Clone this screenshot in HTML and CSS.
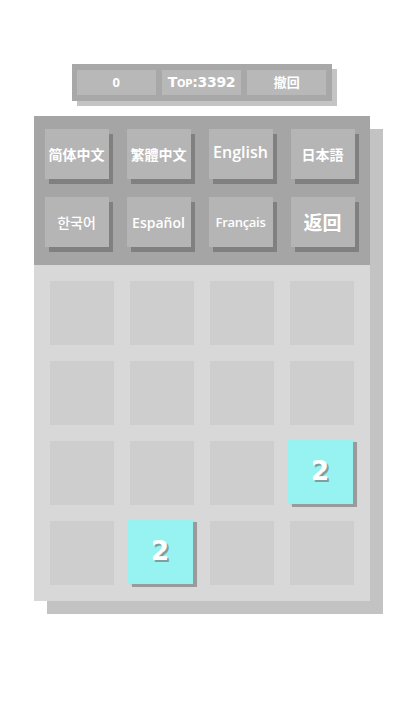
FILE: index.html
```html
<!DOCTYPE html>
<html lang="zh-CN">
<head>
  <meta charset="UTF-8">
  <meta name="viewport" content="width=device-width, initial-scale=1.0">
  <title>2048</title>
  <link rel="stylesheet" href="styles.css">
</head>
<body>
  <!-- スコアバー -->
  <div class="scorebar">
    <div class="score-btn">0</div>
    <div class="score-btn top">Top:3392</div>
    <div class="score-btn">撤回</div>
  </div>

  <div class="game">
    <!-- 言語選択 -->
    <div class="lang-panel">
      <div class="lang-btn">简体中文</div>
      <div class="lang-btn" lang="zh-TW">繁體中文</div>
      <div class="lang-btn latin big">English</div>
      <div class="lang-btn" lang="ja">日本語</div>
      <div class="lang-btn ko" lang="ko">한국어</div>
      <div class="lang-btn latin">Español</div>
      <div class="lang-btn latin small">Français</div>
      <div class="lang-btn back">返回</div>
    </div>

    <div class="board">
      <div class="cell"></div>
      <div class="cell"></div>
      <div class="cell"></div>
      <div class="cell"></div>
      <div class="cell"></div>
      <div class="cell"></div>
      <div class="cell"></div>
      <div class="cell"></div>
      <div class="cell"></div>
      <div class="cell"></div>
      <div class="cell"></div>
      <div class="cell"><div class="tile">2</div></div>
      <div class="cell"></div>
      <div class="cell"><div class="tile">2</div></div>
      <div class="cell"></div>
      <div class="cell"></div>
    </div>
  </div>
</body>
</html>
```

FILE: styles.css
```css
* {
  margin: 0;
  padding: 0;
  box-sizing: border-box;
}
body {
  font-family: "Noto Sans", "Noto Sans CJK SC", sans-serif;
  background-color: #fff;
  color: #fff;
  width: 403px;
  height: 718px;
  overflow: hidden;
}

/* スコアバー */
.scorebar {
  display: flex;
  gap: 6px;
  width: 260px;
  margin: 64px auto 0;
  padding: 6px 5px;
  background-color: #a8a8a8;
  box-shadow: 5px 5px 0 #c4c4c4;
}
.score-btn {
  flex: 1;
  height: 25px;
  background-color: #b8b8b8;
  font-size: 13px;
  font-weight: bold;
  line-height: 25px;
  text-align: center;
}
.score-btn.top {
  font-family: "DejaVu Sans", sans-serif;
  font-size: 14px;
  font-variant: small-caps;
  letter-spacing: -0.3px;
}

.game {
  width: 336px;
  margin: 15px auto 0;
  box-shadow: 13px 13px 0 #c3c3c3;
}

/* 言語選択 */
.lang-panel {
  display: grid;
  grid-template-columns: repeat(4, 64px);
  grid-auto-rows: 50px;
  column-gap: 18px;
  row-gap: 18px;
  padding: 13px 11px 18px;
  background-color: #a5a5a5;
}
.lang-btn {
  display: flex;
  align-items: center;
  justify-content: center;
  background-color: #b5b5b5;
  box-shadow: 4px 5px 0 #808080;
  font-size: 14px;
  font-weight: bold;
  white-space: nowrap;
}
.lang-btn.latin {
  font-family: "Open Sans", sans-serif;
  font-weight: 600;
  font-size: 14px;
}
.lang-btn.big {
  font-size: 16px;
  padding-bottom: 4px;
}
.lang-btn.small {
  font-size: 13px;
  letter-spacing: -0.3px;
}
.lang-btn.ko {
  font-family: "Noto Sans CJK KR", sans-serif;
  font-weight: 500;
}
.lang-btn.back {
  font-size: 19px;
}

/* 盤面 */
.board {
  display: grid;
  grid-template-columns: repeat(4, 64px);
  grid-auto-rows: 64px;
  gap: 16px;
  padding: 16px;
  background-color: #d8d8d8;
}
.cell {
  position: relative;
  background-color: #cecece;
}
.tile {
  position: absolute;
  top: -2px;
  left: -2px;
  width: 65px;
  height: 65px;
  background-color: #96f3f1;
  box-shadow: 4px 3px 0 #9a9a9a;
  font-family: "DejaVu Sans", sans-serif;
  font-size: 26px;
  font-weight: bold;
  line-height: 64px;
  text-align: center;
  text-shadow: 2px 2px 0 #7f9f9f;
}
```
